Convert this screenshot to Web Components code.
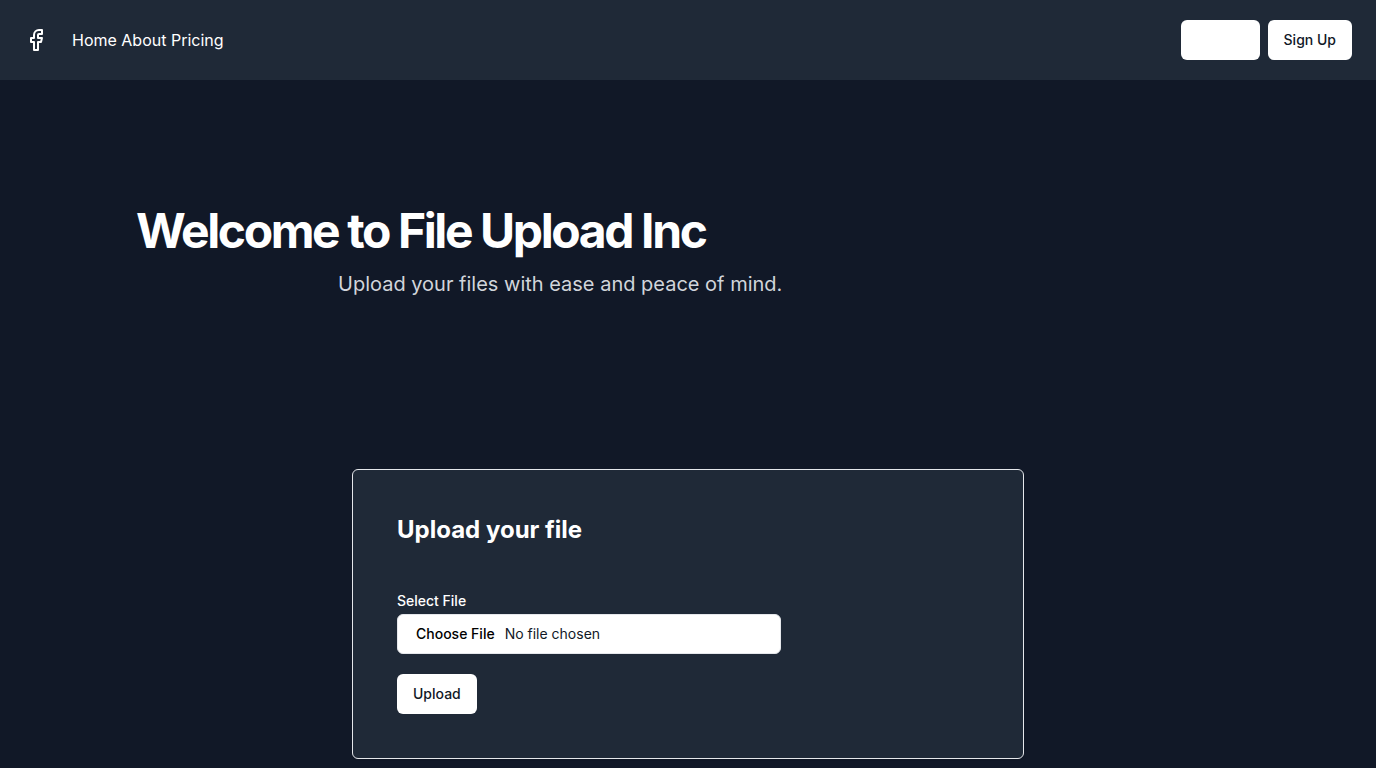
<!DOCTYPE html>
<html lang="en">
<head>
<meta charset="utf-8">
<meta name="viewport" content="width=device-width, initial-scale=1">
<title>File Upload Inc</title>
<style>
  body { margin: 0; background: #111827; color: #fff; font: 16px/24px Inter, "Liberation Sans", sans-serif; }
</style>
</head>
<body>
<upload-page></upload-page>
<script>
  class BaseElement extends HTMLElement {
    constructor() {
      super();
      this.attachShadow({ mode: "open" }).innerHTML =
        `<style>*, *::before, *::after { box-sizing: border-box; }</style>` + this.constructor.markup;
    }
  }

  customElements.define("brand-icon", class extends BaseElement {
    static markup = `
      <style>:host { display: block; width: 24px; height: 24px; } svg { display: block; }</style>
      <svg width="24" height="24" viewBox="0 0 24 24" fill="none" stroke="currentColor" stroke-width="2" stroke-linecap="round" stroke-linejoin="round" aria-hidden="true">
        <path d="M18 2h-3a5 5 0 0 0-5 5v3H7v4h3v8h4v-8h3l1-4h-4V7a1 1 0 0 1 1-1h3z"/>
      </svg>`;
  });

  customElements.define("action-button", class extends BaseElement {
    static markup = `
      <style>
        :host { display: inline-block; }
        button { display: block; width: 100%; height: 40px; padding: 8px 16px; border: 0; border-radius: 6px; background: #fff; color: #111827; font: 500 14px/20px Inter, "Liberation Sans", sans-serif; cursor: pointer; }
      </style>
      <button type="button"><slot></slot></button>`;
    connectedCallback() {
      const name = this.getAttribute("label");
      if (name) this.shadowRoot.querySelector("button").setAttribute("aria-label", name);
    }
  });

  customElements.define("site-header", class extends BaseElement {
    static markup = `
      <style>
        :host { display: block; background: #1f2937; }
        header { display: flex; align-items: center; justify-content: space-between; padding: 20px 24px; }
        .start { display: flex; align-items: center; gap: 24px; }
        .end { display: flex; gap: 8px; }
        .blank { width: 79px; }
        a { color: #fff; text-decoration: none; }
      </style>
      <header>
        <div class="start">
          <a href="#" aria-label="File Upload Inc"><brand-icon></brand-icon></a>
          <nav><a href="#">Home</a> <a href="#">About</a> <a href="#">Pricing</a></nav>
        </div>
        <div class="end">
          <action-button class="blank" label="Sign In"></action-button>
          <action-button>Sign Up</action-button>
        </div>
      </header>`;
  });

  customElements.define("hero-banner", class extends BaseElement {
    static markup = `
      <style>
        :host { display: block; max-width: 1200px; margin: 0 auto; padding: 128px 48px; }
        h1 { margin: 0 0 16px; font-size: 48px; line-height: 46px; font-weight: 700; letter-spacing: -0.05em; }
        p { max-width: 700px; margin: 0 auto; color: #d1d5db; font-size: 20px; line-height: 28px; }
      </style>
      <h1><slot name="title"></slot></h1>
      <p><slot></slot></p>`;
  });

  customElements.define("upload-card", class extends BaseElement {
    static markup = `
      <style>
        :host { display: block; max-width: 672px; margin: 0 auto; padding: 44px; border: 1px solid #e5e7eb; border-radius: 6px; background: #1f2937; box-shadow: 0 1px 2px rgba(0,0,0,.05); }
        h2 { margin: 0 0 48px; font-size: 24px; line-height: 32px; font-weight: 700; }
        form { display: flex; flex-direction: column; align-items: flex-start; gap: 20px; }
        .field { display: flex; flex-direction: column; gap: 6px; width: 100%; max-width: 384px; }
        label { font-size: 14px; line-height: 14px; font-weight: 500; }
        input { width: 100%; height: 40px; padding: 8px 12px; border: 1px solid #e5e7eb; border-radius: 6px; background: #fff; color: #111827; font: 14px/20px Inter, "Liberation Sans", sans-serif; }
        input::file-selector-button { border: 0; background: transparent; padding: 1px 6px; color: #000; font: 500 14px/20px Inter, "Liberation Sans", sans-serif; }
      </style>
      <h2>Upload your file</h2>
      <form>
        <div class="field">
          <label for="file">Select File</label>
          <input id="file" type="file">
        </div>
        <action-button>Upload</action-button>
      </form>`;
  });

  customElements.define("upload-page", class extends BaseElement {
    static markup = `
      <style>:host { display: block; } main { display: grid; gap: 43px; padding-bottom: 8px; } hero-banner, upload-card { width: 100%; }</style>
      <site-header></site-header>
      <main>
        <hero-banner><span slot="title">Welcome to File Upload Inc</span>Upload your files with ease and peace of mind.</hero-banner>
        <upload-card></upload-card>
      </main>`;
  });
</script>
</body>
</html>
